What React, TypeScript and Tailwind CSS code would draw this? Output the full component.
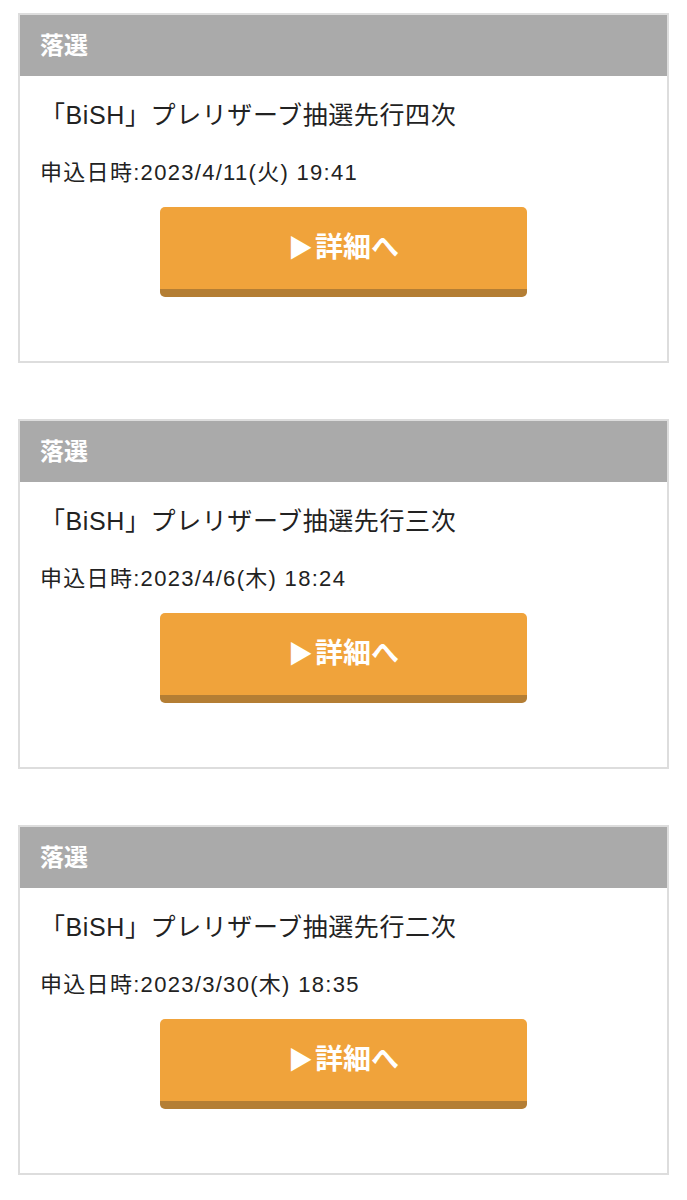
import React from "react";

const items = [
  { title: "「BiSH」プレリザーブ抽選先行四次", date: "申込日時:2023/4/11(火) 19:41" },
  { title: "「BiSH」プレリザーブ抽選先行三次", date: "申込日時:2023/4/6(木) 18:24" },
  { title: "「BiSH」プレリザーブ抽選先行二次", date: "申込日時:2023/3/30(木) 18:35" },
];

export default function App() {
  return (
    <div
      className="w-[687px] bg-white pt-[13px] pb-[20px] flex flex-col gap-[56px]"
      style={{ fontFamily: '"Liberation Sans", "Noto Sans CJK JP", sans-serif' }}
    >
      {items.map((it, i) => (
        <div key={i} className="mx-[18px] border-2 border-[#dddddd] bg-white">
          <div className="h-[61px] bg-[#aaaaaa] flex items-center px-[20px]">
            <span className="text-white font-bold text-[24px] leading-none">落選</span>
          </div>
          <div className="px-[20px] pb-[64px]">
            <div className="mt-[21px] text-[25px] leading-[36px] tracking-[0.6px] text-[#222222]">{it.title}</div>
            <div className="mt-[25px] text-[22px] leading-[30px] tracking-[1.3px] text-[#222222]">{it.date}</div>
            <div className="mt-[19px] flex justify-center">
              <button className="w-[367px] h-[90px] rounded-[5px] bg-[#f0a33b] border-b-[8px] border-[#b47e34] flex items-center justify-center text-white font-bold text-[28px] leading-none">
                <span className="text-[25px] mr-[2px]">▶</span>詳細へ
              </button>
            </div>
          </div>
        </div>
      ))}
    </div>
  );
}
